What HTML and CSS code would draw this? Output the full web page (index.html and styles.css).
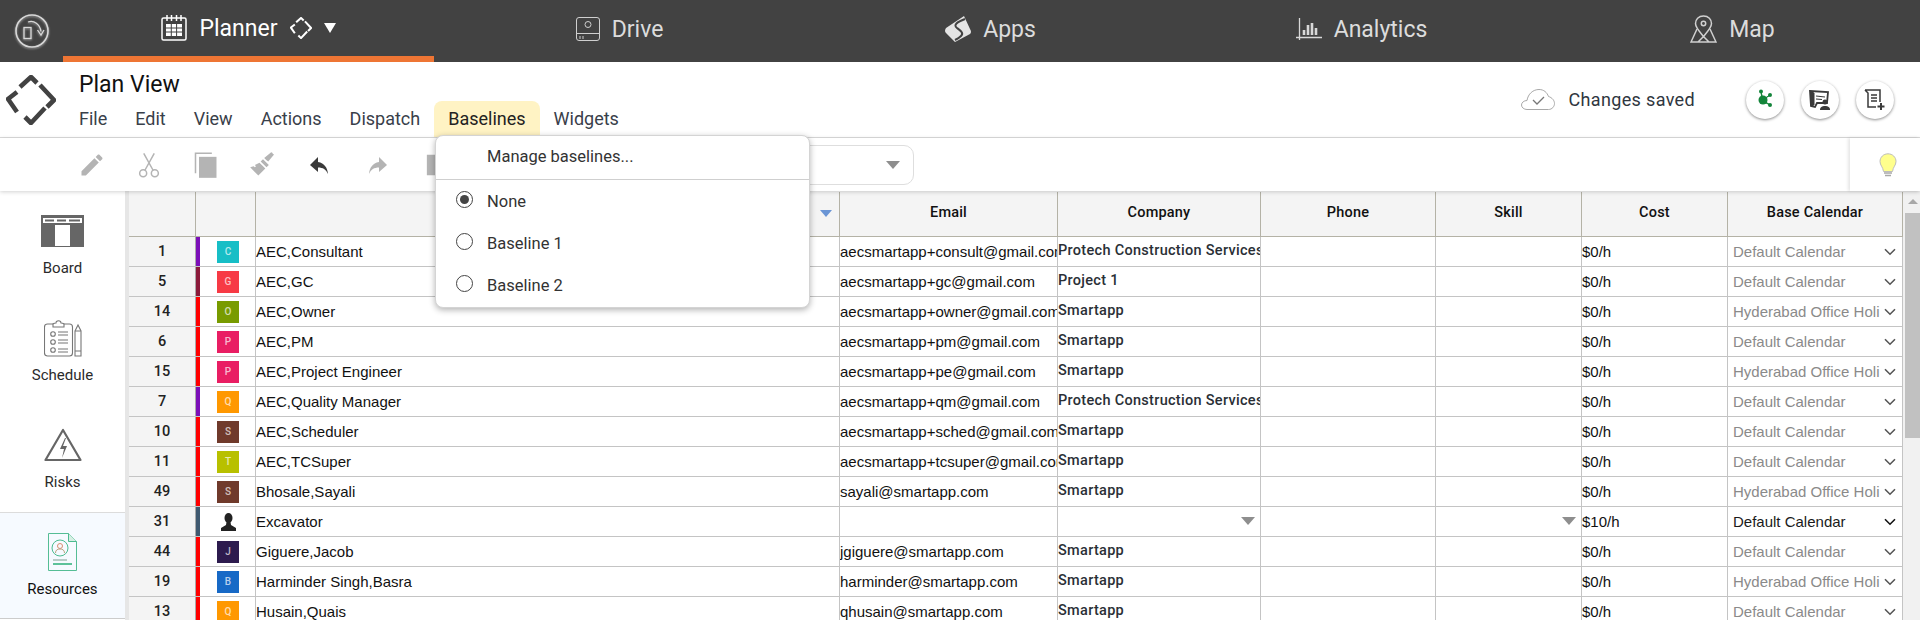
FILE: index.html
```html
<!DOCTYPE html>
<html lang="en">
<head>
<meta charset="utf-8">
<title>Plan View</title>
<link rel="stylesheet" href="styles.css">
</head>
<body>
<svg class="defs" width="0" height="0">
  <symbol id="chev" viewBox="0 0 12 8"><path d="M1 1.200l5 5 5-5" fill="none" stroke="currentColor" stroke-width="1.600"/></symbol>
  <symbol id="diamond" viewBox="0 0 50 50"><g fill="none" stroke="currentColor" stroke-width="4.600" stroke-linejoin="round"><path d="M14 12L25 2l6 6"/><path d="M34 10l14 15-7 7"/><path d="M39 33L25 48l-6-6"/><path d="M11 17L2 24l9 13"/></g></symbol>
</svg>
<header class="nav">
  <div class="nav-logo">
    <svg class="nav-logo-svg" width="36" height="36" viewBox="0 0 36 36" fill="none" stroke="#d8d8d8"><circle cx="18" cy="18" r="16" stroke-width="1.600"/><rect x="10" y="14.500" width="7" height="11" stroke-width="1.300"/><path d="M14 9c6-2 12 2 13 9.500" stroke-width="1.300"/><path d="M23.500 17l3.500 5 3-5" stroke-width="1.300"/></svg>
  </div>
  <div class="tabs">
    <div class="tab tab-active">
      <svg width="26" height="26" viewBox="0 0 26 26" fill="none" stroke="#fff" stroke-width="1.500"><rect x="1" y="3" width="24" height="22" rx="1.500"/><path d="M6 0v6M10.500 0v6M15.500 0v6M20 0v6"/><path d="M5 9h16v12H5z" fill="#fff" stroke="none"/><path d="M10.300 9v12M15.600 9v12M5 13h16M5 17h16" stroke="#424242" stroke-width="1"/></svg>
      <span class="tab-label">Planner</span>
      <svg width="22" height="22" class="tab-diamond"><use href="#diamond"/></svg>
      <svg width="12" height="10" viewBox="0 0 12 10"><path d="M0 0h12L6 10z" fill="#fff"/></svg>
    </div>
    <div class="tab">
      <svg width="24" height="24" viewBox="0 0 24 24" fill="none" stroke="#cfcfcf" stroke-width="1"><rect x=".5" y=".5" width="23" height="23" rx="2.500"/><circle cx="12" cy="7.500" r="3"/><path d="M.5 16.500h23M4 19v3M7 19v3"/></svg>
      <span class="tab-label">Drive</span>
    </div>
    <div class="tab">
      <svg width="26" height="26" viewBox="0 0 26 26"><path d="M19 0L1 12q-2 3 0 5l9 9 15-8q2-2 0-5z" fill="#e4e4e4"/><path d="M20 3c-8 3-12 6-8 9s7 5 4 8c-2 2-4 3-6 4" fill="none" stroke="#424242" stroke-width="2"/></svg>
      <span class="tab-label">Apps</span>
    </div>
    <div class="tab">
      <svg width="26" height="24" viewBox="0 0 26 24" fill="none" stroke="#d8d8d8" stroke-width="1.300"><path d="M3.500 1v22M0 20.500h26"/><path d="M8 18v-5M12 18V8M16 18V6M20 18v-7" stroke-width="2.600"/></svg>
      <span class="tab-label">Analytics</span>
    </div>
    <div class="tab">
      <svg width="27" height="28" viewBox="0 0 27 28" fill="none" stroke="#d0d0d0" stroke-width="1.500"><path d="M13.500 1c-5 0-8 3.500-8 7.500 0 4 4 8 8 13 4-5 8-9 8-13 0-4-3-7.500-8-7.500z"/><circle cx="13.500" cy="8.500" r="2.200"/><path d="M7 14L1 27h25l-6-13M8 27l5.500-5.500L19 27"/></svg>
      <span class="tab-label">Map</span>
    </div>
  </div>
</header>

<section class="subhead">
  <svg class="brand" width="50" height="50"><use href="#diamond"/></svg>
  <div class="titles">
    <div class="title">Plan View</div>
    <nav class="menu">
      <span class="menu-item">File</span>
      <span class="menu-item">Edit</span>
      <span class="menu-item">View</span>
      <span class="menu-item">Actions</span>
      <span class="menu-item">Dispatch</span>
      <span class="menu-item menu-open">Baselines</span>
      <span class="menu-item">Widgets</span>
    </nav>
  </div>
  <div class="status">
    <svg width="34" height="21" viewBox="0 0 34 21" fill="none" stroke="#a8a8a8" stroke-width="1"><path d="M6 20.500c-3 0-5.500-2-5.500-4.500S3 11.500 6 11.500C7 5 12 .5 18 .5c5 0 8 3 9.500 7 3.500 1 6 4 6 7 0 3-2.500 6-6 6z"/><path d="M12 11l4 4 7-7" stroke="#777" stroke-width="1.300"/></svg>
    <span class="status-text">Changes saved</span>
  </div>
  <div class="round-btns">
    <button class="round-btn"><svg width="20" height="22" viewBox="0 0 20 22" fill="#13853a"><circle cx="8" cy="11" r="4.500"/><circle cx="6" cy="2.500" r="2"/><circle cx="15" cy="6" r="2"/><circle cx="15" cy="16" r="2"/><path d="M6 2.500l2 8 7-4.500-7 5 7 5-8-4z" stroke="#13853a"/></svg></button>
    <button class="round-btn"><svg width="22" height="22" viewBox="0 0 22 22" fill="none" stroke="#3a3a3a"><path d="M1 2l18 1-1 11H8l-2 4-4-1z" fill="#fff" stroke-width="1.800"/><path d="M2 3l3 1v12l-3 1z" fill="#3a3a3a"/><path d="M7 7l9 1M7 10l6 .5" stroke-width="1.200"/><circle cx="16" cy="13" r="2.500" fill="#3a3a3a" stroke="none"/><path d="M11 21c0-3 2-4 5-4s5 1 5 4z" fill="#3a3a3a" stroke="none"/></svg></button>
    <button class="round-btn"><svg width="22" height="22" viewBox="0 0 22 22" fill="none" stroke="#3a3a3a" stroke-width="1.500"><path d="M1 1h15v12M1 1l3 3v14h8"/><path d="M7 6h6M7 9h6M7 12h6"/><path d="M17 14v7M13.500 17.500h7" stroke-width="2"/></svg></button>
  </div>
</section>

<section class="toolbar">
  <div class="tools">
    <svg class="tool" viewBox="0 0 24 24"><path d="M3 17.250V21h3.750L17.810 9.940l-3.750-3.750L3 17.250zM20.710 7.040c.39-.39.39-1.020 0-1.410l-2.340-2.340c-.39-.39-1.020-.39-1.410 0l-1.830 1.830 3.750 3.750 1.830-1.830z"/></svg>
    <svg class="tool" viewBox="0 0 24 24"><g fill="none" stroke="#b4b4b4" stroke-width="1.300"><circle cx="7" cy="19" r="3"/><circle cx="17" cy="19" r="3"/><path d="M8.500 16.500L16.500 2M15.500 16.500L7.500 2"/></g></svg>
    <svg class="tool" viewBox="0 0 24 24"><path d="M6 5h15v18H6z"/><path d="M3 19V2h14" fill="none" stroke="#b4b4b4" stroke-width="1.300"/></svg>
    <svg class="tool" viewBox="0 0 24 24"><path d="M15 8l-2-2 6-5 1 .5 .5 1 1 .5-5 6zM12 7l5 5-2 2-5-5zM9 10l5 5-6 6-7-7 3-1 1 1 1-1-1-1z"/></svg>
    <svg class="tool tool-on" viewBox="0 0 28 28"><path d="M12 11V6l-8 8 8 7v-4.500c5 0 8 2 10 6.500-.5-6-3.500-11-10-12z"/></svg>
    <svg class="tool" viewBox="0 0 28 28"><path d="M16 11V6l8 8-8 7v-4.500c-5 0-8 2-10 6.500.5-6 3.500-11 10-12z"/></svg>
    <svg class="tool" viewBox="0 0 28 28" fill="none"><path d="M7.500 4.500h18v19h-18z" stroke="#b4b4b4" stroke-width="1.300"/><path d="M10 10h5v4h-5zM10 15h5v4h-5z" stroke="#b4b4b4"/></svg>
  </div>
  <div class="picker"><i class="tri"></i></div>
  <div class="bulb">
    <svg width="18" height="24" viewBox="0 0 18 24"><path d="M9 .8C4.500.8 1 4.200 1 8.500c0 3.800 3 5.500 3.500 10h9C14 14 17 12.300 17 8.500 17 4.200 13.500.8 9 .8z" fill="#ffff8d" stroke="#bcbcbc"/><path d="M5 20h8M6 22.500h6" stroke="#a8a8a8" stroke-width="1.500"/></svg>
  </div>
</section>

<div class="main">
  <aside class="side">
    <div class="side-item">
      <div class="side-icon"><svg width="43" height="32" viewBox="0 0 43 32"><path d="M0 0h43v32H0z" fill="#666"/><path d="M14 10h15v21H14z" fill="#fff"/><path d="M2 3h39v5H2z" fill="#fff"/><path d="M4 4.500h9v2H4zM16 4.500h9v2h-9zM28 4.500h11v2H28z" fill="#666"/></svg></div>
      <span class="side-label">Board</span>
    </div>
    <div class="side-item">
      <div class="side-icon"><svg width="38" height="37" viewBox="0 0 38 37" fill="none" stroke="#777" stroke-width="1.100"><rect x=".5" y="4" width="28" height="32" rx="3"/><path d="M9 4c1-1 2-1 3-1 0-3 5-3 5 0 1 0 2 0 3 1v3H9z" fill="#fff"/><circle cx="9" cy="14" r="2.300"/><circle cx="9" cy="22" r="2.300"/><circle cx="9" cy="30" r="2.300"/><path d="M14 12h10M14 15h10M14 20h10M14 23h10M14 29h10M14 32h10"/><path d="M31 11l3-6 3 6v25h-6z"/><path d="M31 11h6M31 31h6"/></svg></div>
      <span class="side-label">Schedule</span>
    </div>
    <div class="side-item">
      <div class="side-icon"><svg width="38" height="34" viewBox="0 0 38 34" fill="none" stroke="#666" stroke-width="2.200"><path d="M19 2L1.500 32h35z" stroke-linejoin="round"/><path d="M21 10l-5 11h4l-2 9 5-12h-4l3-8z" fill="#666" stroke="none"/></svg></div>
      <span class="side-label">Risks</span>
    </div>
    <div class="side-item side-active">
      <div class="side-icon"><svg width="29" height="38" viewBox="0 0 29 38" fill="none" stroke="#4cbb8f" stroke-width="1"><path d="M.5.500h20l8 8v29H.5z" stroke="#55bd95"/><path d="M20.500.500v8h8" fill="#d6efe4"/><circle cx="12" cy="15" r="8" stroke="#4cbb8f"/><circle cx="12" cy="13" r="2.500" stroke="#d98e70"/><path d="M7.500 20c0-3 2-4 4.500-4s4.500 1 4.500 4" stroke="#b9a27f"/><path d="M5 27h14" stroke="#7a9f90"/><path d="M5 31h19" stroke="#4cbb8f" stroke-width="1.800"/></svg></div>
      <span class="side-label">Resources</span>
    </div>
  </aside>

  <div class="grid">
    <div class="row head">
      <div class="c hc"></div><div class="c hc"></div>
      <div class="c hc hc-name"><i class="tri tri-blue"></i></div>
      <div class="c hc">Email</div><div class="c hc">Company</div><div class="c hc">Phone</div><div class="c hc">Skill</div><div class="c hc">Cost</div><div class="c hc">Base Calendar</div>
    </div>

    <div class="row"><div class="c num">1</div><div class="c pic bar-purple"><span class="av av-teal">C</span></div><div class="c txt">AEC,Consultant</div><div class="c txt">aecsmartapp+consult@gmail.com</div><div class="c co">Protech Construction Services</div><div class="c"></div><div class="c"></div><div class="c txt">$0/h</div><div class="c cal">Default Calendar<svg class="chev"><use href="#chev"/></svg></div></div>
    <div class="row"><div class="c num">5</div><div class="c pic bar-wine"><span class="av av-red">G</span></div><div class="c txt">AEC,GC</div><div class="c txt">aecsmartapp+gc@gmail.com</div><div class="c co">Project 1</div><div class="c"></div><div class="c"></div><div class="c txt">$0/h</div><div class="c cal">Default Calendar<svg class="chev"><use href="#chev"/></svg></div></div>
    <div class="row"><div class="c num">14</div><div class="c pic bar-red"><span class="av av-olive">O</span></div><div class="c txt">AEC,Owner</div><div class="c txt">aecsmartapp+owner@gmail.com</div><div class="c co">Smartapp</div><div class="c"></div><div class="c"></div><div class="c txt">$0/h</div><div class="c cal">Hyderabad Office Holi<svg class="chev"><use href="#chev"/></svg></div></div>
    <div class="row"><div class="c num">6</div><div class="c pic bar-red"><span class="av av-pink">P</span></div><div class="c txt">AEC,PM</div><div class="c txt">aecsmartapp+pm@gmail.com</div><div class="c co">Smartapp</div><div class="c"></div><div class="c"></div><div class="c txt">$0/h</div><div class="c cal">Default Calendar<svg class="chev"><use href="#chev"/></svg></div></div>
    <div class="row"><div class="c num">15</div><div class="c pic bar-red"><span class="av av-pink">P</span></div><div class="c txt">AEC,Project Engineer</div><div class="c txt">aecsmartapp+pe@gmail.com</div><div class="c co">Smartapp</div><div class="c"></div><div class="c"></div><div class="c txt">$0/h</div><div class="c cal">Hyderabad Office Holi<svg class="chev"><use href="#chev"/></svg></div></div>
    <div class="row"><div class="c num">7</div><div class="c pic bar-purple"><span class="av av-orange">Q</span></div><div class="c txt">AEC,Quality Manager</div><div class="c txt">aecsmartapp+qm@gmail.com</div><div class="c co">Protech Construction Services</div><div class="c"></div><div class="c"></div><div class="c txt">$0/h</div><div class="c cal">Default Calendar<svg class="chev"><use href="#chev"/></svg></div></div>
    <div class="row"><div class="c num">10</div><div class="c pic bar-red"><span class="av av-brown">S</span></div><div class="c txt">AEC,Scheduler</div><div class="c txt">aecsmartapp+sched@gmail.com</div><div class="c co">Smartapp</div><div class="c"></div><div class="c"></div><div class="c txt">$0/h</div><div class="c cal">Default Calendar<svg class="chev"><use href="#chev"/></svg></div></div>
    <div class="row"><div class="c num">11</div><div class="c pic bar-red"><span class="av av-lime">T</span></div><div class="c txt">AEC,TCSuper</div><div class="c txt">aecsmartapp+tcsuper@gmail.com</div><div class="c co">Smartapp</div><div class="c"></div><div class="c"></div><div class="c txt">$0/h</div><div class="c cal">Default Calendar<svg class="chev"><use href="#chev"/></svg></div></div>
    <div class="row"><div class="c num">49</div><div class="c pic bar-red"><span class="av av-brown">S</span></div><div class="c txt">Bhosale,Sayali</div><div class="c txt">sayali@smartapp.com</div><div class="c co">Smartapp</div><div class="c"></div><div class="c"></div><div class="c txt">$0/h</div><div class="c cal">Hyderabad Office Holi<svg class="chev"><use href="#chev"/></svg></div></div>
    <div class="row"><div class="c num">31</div><div class="c pic bar-slate"><svg width="15" height="18" viewBox="0 0 15 18" fill="#222"><ellipse cx="7.500" cy="5" rx="4" ry="5"/><path d="M5.500 9l-.5 3-5 3v3h15v-3l-5-3-.5-3z"/></svg></div><div class="c txt">Excavator</div><div class="c"></div><div class="c drop"><i class="tri"></i></div><div class="c"></div><div class="c drop"><i class="tri"></i></div><div class="c txt">$10/h</div><div class="c cal cal-dark">Default Calendar<svg class="chev"><use href="#chev"/></svg></div></div>
    <div class="row"><div class="c num">44</div><div class="c pic bar-red"><span class="av av-navy">J</span></div><div class="c txt">Giguere,Jacob</div><div class="c txt">jgiguere@smartapp.com</div><div class="c co">Smartapp</div><div class="c"></div><div class="c"></div><div class="c txt">$0/h</div><div class="c cal">Default Calendar<svg class="chev"><use href="#chev"/></svg></div></div>
    <div class="row"><div class="c num">19</div><div class="c pic bar-red"><span class="av av-blue">B</span></div><div class="c txt">Harminder Singh,Basra</div><div class="c txt">harminder@smartapp.com</div><div class="c co">Smartapp</div><div class="c"></div><div class="c"></div><div class="c txt">$0/h</div><div class="c cal">Hyderabad Office Holi<svg class="chev"><use href="#chev"/></svg></div></div>
    <div class="row"><div class="c num">13</div><div class="c pic bar-red"><span class="av av-orange">Q</span></div><div class="c txt">Husain,Quais</div><div class="c txt">qhusain@smartapp.com</div><div class="c co">Smartapp</div><div class="c"></div><div class="c"></div><div class="c txt">$0/h</div><div class="c cal">Default Calendar<svg class="chev"><use href="#chev"/></svg></div></div>
  </div>

  <div class="scroll"><i class="scroll-up"></i><div class="scroll-thumb"></div></div>
</div>

<div class="dropdown">
  <div class="dd-manage">Manage baselines...</div>
  <div class="dd-item"><i class="radio radio-on"></i>None</div>
  <div class="dd-item"><i class="radio"></i>Baseline 1</div>
  <div class="dd-item"><i class="radio"></i>Baseline 2</div>
</div>
</body>
</html>
```

FILE: styles.css
```css
* { box-sizing: border-box; }
html, body { margin: 0; height: 620px; overflow: hidden; background: #fff; }
body { font-family: Roboto, "Liberation Sans", sans-serif; color: #2f3640; position: relative; }
.defs { position: absolute; }

.nav { display: flex; height: 62px; background: #424242; }
.nav-logo { width: 63px; display: flex; align-items: center; padding-left: 14px; }
.nav-logo-svg { filter: drop-shadow(0 1px 1px rgba(255,255,255,.5)); }
.tabs { display: grid; grid-template-columns: repeat(5, 371px); }
.tab { display: flex; align-items: center; justify-content: center; gap: 12px; color: #dcdcdc; font-size: 23px; padding-bottom: 4px; }
.tab-active { color: #fff; border-bottom: 6px solid #ee7534; padding-bottom: 0; }
.tab-diamond { color: #fff; }

.subhead { display: flex; height: 76px; border-bottom: 1px solid #dcdcdc; }
.brand { color: #424242; margin: 13px 0 0 6px; }
.titles { margin-left: 9px; }
.title { font-size: 23px; color: #111; padding-left: 14px; height: 39px; line-height: 46px; }
.menu { display: flex; height: 36px; }
.menu-item { padding: 0 14px; font-size: 18px; line-height: 36px; color: #39404a; }
.menu-open { background: #fff3c4; border-radius: 8px 8px 0 0; color: #222; }
.status { margin-left: auto; display: flex; align-items: center; gap: 13px; padding-bottom: 1px; }
.status-text { font-size: 18px; letter-spacing: .35px; }
.round-btns { display: flex; gap: 17px; align-items: center; margin: 0 26px 0 51px; }
.round-btn { width: 38px; height: 38px; border-radius: 50%; border: 0; padding: 0; background: #fff; box-shadow: 0 1px 3px rgba(0,0,0,.45); display: flex; align-items: center; justify-content: center; }

.toolbar { display: flex; align-items: center; height: 53px; position: relative; z-index: 1; box-shadow: 0 1px 4px rgba(0,0,0,.18); background: #fff; padding-left: 78px; }
.tools { display: flex; gap: 29px; }
.tool { width: 28px; height: 28px; fill: #b4b4b4; }
.tool-on { fill: #3a3a3a; }
.picker { margin-left: 10px; width: 456px; height: 40px; border: 1px solid #dedede; border-radius: 10px; display: flex; align-items: center; justify-content: flex-end; padding-right: 13px; }
.tri { display: block; width: 0; height: 0; border-left: 7px solid transparent; border-right: 7px solid transparent; border-top: 8px solid #8e8e8e; }
.tri-blue { border-left-width: 6px; border-right-width: 6px; border-top: 7px solid #6a95d5; }
.bulb { margin-left: auto; width: 70px; height: 53px; display: flex; align-items: center; justify-content: center; padding-left: 6px; box-shadow: -2px 0 3px rgba(0,0,0,.1); }

.main { display: flex; height: 429px; overflow: hidden; }
.side { width: 129px; flex: none; border-right: 4px solid #e6e6e6; display: flex; flex-direction: column; }
.side-item { height: 107px; flex: none; display: flex; flex-direction: column; align-items: center; }
.side-icon { height: 68px; padding-top: 12px; display: flex; align-items: center; }
.side-label { font-size: 15px; color: #2b2b2b; line-height: 18px; }
.side-active { background: #f6faff; box-shadow: inset 0 1px 0 #dcdcdc, inset 0 -1px 0 #ccc; }
.side-active .side-label { color: #111; }

.grid { width: 1774px; flex: none; }
.row { display: grid; grid-template-columns: 67px 60px 584px 218px 203px 175px 146px 146px 175px; height: 30px; border-bottom: 1px solid #c4c4c4; }
.head { height: 46px; background: #f4f4f4; border-bottom: 1px solid #b4b2a6; padding-top: 1px; }
.c { border-right: 1px solid #c4c4c4; font-family: "Liberation Sans", Arial, sans-serif; font-size: 15px; line-height: 29px; color: #111; white-space: nowrap; overflow: hidden; min-width: 0; }
.hc { font-family: Roboto, sans-serif; font-weight: 500; font-size: 14.500px; letter-spacing: .2px; line-height: 42px; text-align: center; border-right-color: #b4b2a6; }
.hc-name { display: flex; justify-content: flex-end; align-items: center; padding: 0 7px 2px 0; }
.num { background: #f4f4f4; text-align: center; font-family: Roboto, sans-serif; font-weight: 500; font-size: 14.500px; color: #222; border-right-color: #aaa; }
.pic { border-left: 4px solid; padding: 0 0 0 17px; display: flex; align-items: center; }
.bar-purple { border-left-color: #7b0fb8; }
.bar-wine { border-left-color: #8b1a3a; }
.bar-red { border-left-color: #f00; }
.bar-slate { border-left-color: #3f5970; }
.bar-slate svg { margin-left: 4px; }
.av { width: 22px; height: 22px; display: flex; align-items: center; justify-content: center; font-family: Roboto, sans-serif; font-weight: 500; font-size: 10px; color: rgba(255,255,255,.7); }
.av-teal { background: #17bec6; }
.av-red { background: #f73a45; }
.av-olive { background: #789b00; }
.av-pink { background: #e91e63; }
.av-orange { background: #ff9800; }
.av-brown { background: #703a2b; }
.av-lime { background: #b8c000; }
.av-navy { background: #2d1b4e; }
.av-blue { background: #1769c6; }
.co { font-family: Roboto, sans-serif; font-weight: 500; font-size: 14.500px; letter-spacing: .3px; line-height: 27px; color: #2a2f36; }
.drop { display: flex; align-items: center; justify-content: flex-end; padding: 0 5px 2px 0; }
.cal { color: #8a8a8a; padding: 0 0 0 5px; position: relative; }
.cal-dark { color: #1a1a1a; }
.chev { width: 12px; height: 8px; position: absolute; right: 6px; top: 11px; color: #555; }
.cal-dark .chev { color: #111; }

.scroll { flex: 1; background: #f1f1f1; padding-left: 2px; }
.scroll-up { display: block; width: 0; height: 0; margin: 8px 0 0 3px; border-left: 5px solid transparent; border-right: 5px solid transparent; border-bottom: 5px solid #a8a8a8; }
.scroll-thumb { height: 225px; margin-top: 9px; background: #c1c1c1; }

.dropdown { position: absolute; left: 435px; top: 135px; width: 375px; height: 173px; background: #fff; border-radius: 8px; z-index: 5; border: 1px solid #d4d4d4; box-shadow: 0 2px 6px rgba(0,0,0,.3); font-size: 16.500px; color: #333; }
.dd-manage { height: 44px; border-bottom: 1px solid #cfcfcf; padding-left: 51px; line-height: 42px; }
.dd-item { height: 42px; display: flex; align-items: center; padding-left: 20px; }
.radio { width: 17px; height: 17px; border: 1.500px solid #444; border-radius: 50%; margin: -3px 14px 0 0; display: flex; align-items: center; justify-content: center; }
.radio-on::after { content: ""; width: 9px; height: 9px; background: #444; border-radius: 50%; }
```
